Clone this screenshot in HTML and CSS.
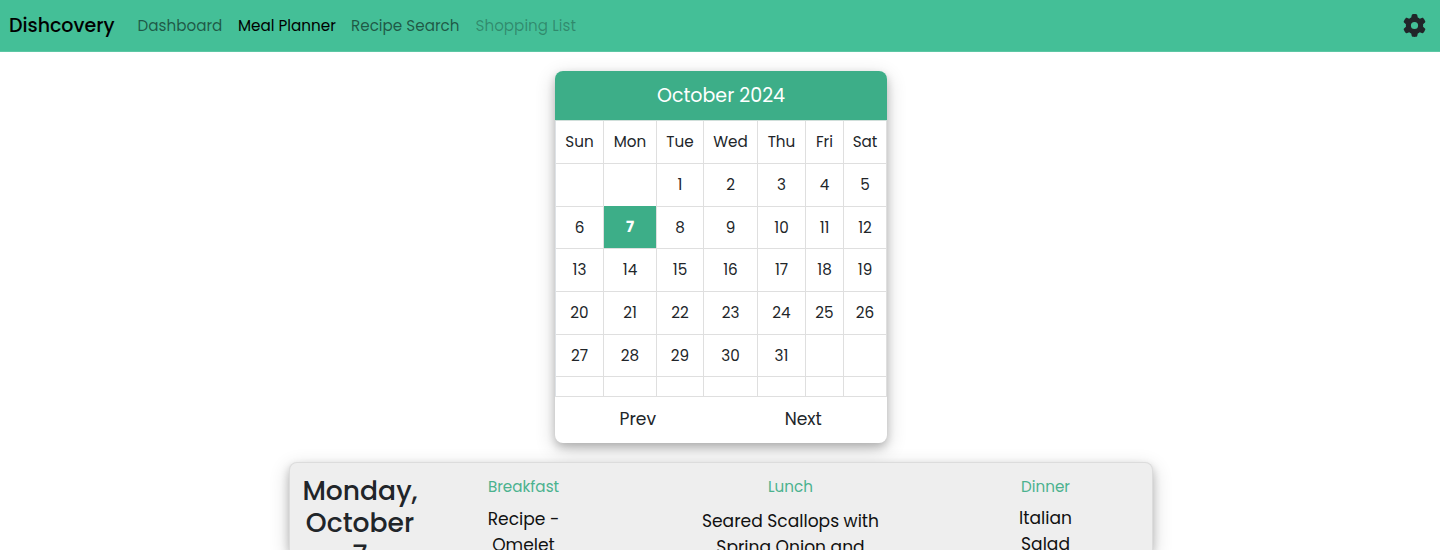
FILE: index.html
```html
<!DOCTYPE html>
<html lang="en">
<head>
<meta charset="utf-8">
<title>Dishcovery</title>
<link rel="stylesheet" href="styles.css">
</head>
<body>
<nav class="navbar">
  <a class="brand">Dishcovery</a>
  <a class="link dash">Dashboard</a>
  <a class="link active">Meal Planner</a>
  <a class="link search">Recipe Search</a>
  <a class="link disabled">Shopping List</a>
  <svg class="gear" viewBox="0 0 512 512"><path d="M495.9 166.6c3.2 8.7 .5 18.4-6.4 24.6l-43.3 39.4c1.1 8.3 1.7 16.8 1.7 25.4s-.6 17.1-1.7 25.4l43.3 39.4c6.9 6.2 9.6 15.9 6.4 24.6c-4.4 11.9-9.7 23.3-15.8 34.3l-4.7 8.1c-6.600 11-14 21.400-22.100 31.200c-5.900 7.200-15.700 9.600-24.500 6.800l-55.700-17.700c-13.400 10.300-28.200 18.900-44 25.400l-12.500 57.100c-2 9.100-9 16.300-18.200 17.800c-13.800 2.300-28 3.500-42.500 3.500s-28.700-1.200-42.500-3.500c-9.200-1.500-16.200-8.700-18.200-17.800l-12.500-57.100c-15.800-6.500-30.600-15.100-44-25.400L83.100 425.900c-8.800 2.800-18.600 .3-24.500-6.800c-8.100-9.800-15.500-20.200-22.100-31.200l-4.700-8.100c-6.100-11-11.400-22.400-15.800-34.300c-3.200-8.700-.5-18.400 6.400-24.600l43.300-39.400C64.600 273.100 64 264.600 64 256s.6-17.100 1.700-25.400L22.400 191.200c-6.900-6.200-9.600-15.900-6.400-24.600c4.400-11.900 9.700-23.300 15.800-34.300l4.700-8.100c6.600-11 14-21.400 22.100-31.200c5.900-7.200 15.700-9.600 24.500-6.800l55.700 17.700c13.400-10.300 28.200-18.900 44-25.400l12.500-57.100c2-9.100 9-16.300 18.200-17.800C227.300 1.200 241.500 0 256 0s28.700 1.200 42.500 3.500c9.200 1.500 16.200 8.700 18.200 17.800l12.500 57.100c15.800 6.500 30.600 15.100 44 25.400l55.700-17.700c8.800-2.800 18.600-.3 24.500 6.800c8.100 9.800 15.500 20.200 22.100 31.200l4.700 8.100c6.100 11 11.400 22.400 15.800 34.300zM256 336a80 80 0 1 0 0-160 80 80 0 1 0 0 160z"/></svg>
</nav>
<main>
  <section class="calendar">
    <h3 class="month">October 2024</h3>
    <div class="days">
      <span>Sun</span><span>Mon</span><span>Tue</span><span>Wed</span><span>Thu</span><span>Fri</span><span>Sat</span>
      <span></span><span></span><span>1</span><span>2</span><span>3</span><span>4</span><span>5</span>
      <span>6</span><span class="today">7</span><span>8</span><span>9</span><span>10</span><span>11</span><span>12</span>
      <span>13</span><span>14</span><span>15</span><span>16</span><span>17</span><span>18</span><span>19</span>
      <span>20</span><span>21</span><span>22</span><span>23</span><span>24</span><span>25</span><span>26</span>
      <span>27</span><span>28</span><span>29</span><span>30</span><span>31</span><span></span><span></span>
      <span></span><span></span><span></span><span></span><span></span><span></span><span></span>
    </div>
    <div class="pager"><a>Prev</a><a>Next</a></div>
  </section>
  <section class="plan">
    <h2 class="date">Monday,<br>October<br>7</h2>
    <div class="meal breakfast"><h5>Breakfast</h5><p>Recipe -<br>Omelet</p></div>
    <div class="meal lunch"><h5>Lunch</h5><p>Seared Scallops with<br>Spring Onion and</p></div>
    <div class="meal dinner"><h5>Dinner</h5><p>Italian<br>Salad</p></div>
  </section>
</main>
</body>
</html>
```
FILE: styles.css
```css
* { box-sizing: border-box; }
body {
  margin: 0;
  height: 550px;
  overflow: hidden;
  background: #fff;
  color: #212529;
  font: 15.2px/24px Poppins, Inter, sans-serif;
}
h2, h3, h5, p { margin: 0; font-weight: 400; }
.navbar {
  display: flex;
  align-items: center;
  height: 52px;
  padding: 1px 14px 0 9px;
  background: #44bf97;
  border-bottom: 1px solid #5cc7a4;
  white-space: nowrap;
}
.brand { width: 128.5px; font-size: 19px; font-weight: 500; color: #000; }
.link { color: rgba(0, 0, 0, .55); }
.dash { width: 100.5px; }
.active { width: 113px; color: #000; }
.search { width: 124.5px; }
.disabled { color: rgba(0, 0, 0, .28); }
.gear { width: 23px; height: 23px; margin: 0 0 2px auto; fill: #212529; }
.calendar {
  width: 332px;
  height: 372px;
  margin: 19px 0 0 555px;
  border-radius: 8px;
  overflow: hidden;
  background: #fff;
  box-shadow: 0 4px 8px rgba(0, 0, 0, .2), 0 6px 20px rgba(0, 0, 0, .19);
}
.month {
  height: 50px;
  background: #3dae88;
  color: #fff;
  font-size: 19px;
  line-height: 49px;
  text-align: center;
  border-bottom: 1px solid #d0dfda;
}
.days {
  display: grid;
  grid-template-columns: 48px 53px 47px 54px 48px 38px 43px;
  grid-template-rows: 43px 43px 42px 43px 43px 42px 20px;
  width: 332px;
  border-left: 1px solid #dee2e6;
}
.days span {
  display: flex;
  align-items: center;
  justify-content: center;
  border-right: 1px solid #dfdfdf;
  border-bottom: 1px solid #dfdfdf;
}
.days .today { margin-top: -1px; background: #3dae88; color: #fff; font-weight: 700; }
.pager { display: grid; grid-template-columns: 1fr 1fr; width: 331px; font-size: 17.1px; line-height: 44px; text-align: center; }
.plan {
  display: grid;
  grid-template-columns: 140px 187px 347px 163px;
  width: 864px;
  height: 88px;
  margin: 19px 0 0 289px;
  padding-top: 12px;
  border: 1px solid #dcdcdc;
  border-bottom: 0;
  border-radius: 8px 8px 0 0;
  background: #eee;
  text-align: center;
  box-shadow: 0 4px 8px rgba(0, 0, 0, .2), 0 6px 20px rgba(0, 0, 0, .19);
}
.date { font-size: 26.6px; line-height: 32px; font-weight: 500; }
.meal h5 { font-size: 15.2px; line-height: 23px; color: #4bb28e; }
.meal p { margin-top: 8px; font-size: 17.1px; line-height: 26px; color: #111; }
.lunch p { margin-top: 10px; }
.dinner p { margin-top: 7px; }
```
